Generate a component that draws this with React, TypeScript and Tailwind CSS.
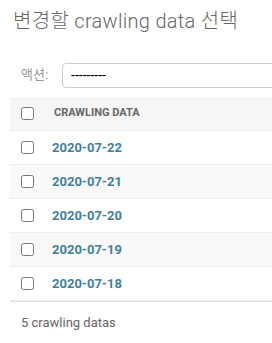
export default function App() {
  const rows = ["2020-07-22", "2020-07-21", "2020-07-20", "2020-07-19", "2020-07-18"];
  const font = { fontFamily: "Roboto, 'Noto Sans CJK KR', sans-serif" };
  return (
    <div className="w-[272px] h-[343px] overflow-hidden bg-white" style={font}>
      <div className="w-[600px] pl-[10px]">
        <h1 className="pt-[9px] pl-[3px] text-[20px] leading-[24px] font-light text-[#666] mb-[20px] tracking-[0.3px]">
          변경할 crawling data 선택
        </h1>
        <div className="flex items-center h-[44px] px-[11px] text-[13px] text-[#999]">
          <span>액션:</span>
          <div className="ml-[14px] h-[25px] w-[400px] border border-[#ccc] rounded-[4px] flex items-center pl-[8px] text-[14px] text-black">
            ---------
          </div>
        </div>
        <div className="flex items-center h-[34px] bg-[#f6f6f6] border-b border-[#eee]">
          <div className="w-[42px] flex items-center pl-[11px]">
            <input type="checkbox" className="m-0 w-[13px] h-[13px]" />
          </div>
          <span className="pl-[2px] text-[11px] font-bold uppercase text-[#666]">Crawling data</span>
        </div>
        {rows.map((d, i) => (
          <div
            key={d}
            className={`flex items-center h-[34px] border-b border-[#eee] ${i % 2 === 1 ? "bg-[#f9f9f9]" : "bg-white"}`}
          >
            <div className="w-[42px] flex items-center pl-[11px]">
              <input type="checkbox" className="m-0 w-[13px] h-[13px]" />
            </div>
            <a href="#" className="text-[13px] font-bold text-[#447e9b]">{d}</a>
          </div>
        ))}
        <div className="border-t border-[#ddd] py-[10px] pl-[11px] text-[13px] leading-[22px] text-[#666]">
          5 crawling datas
        </div>
      </div>
    </div>
  );
}
